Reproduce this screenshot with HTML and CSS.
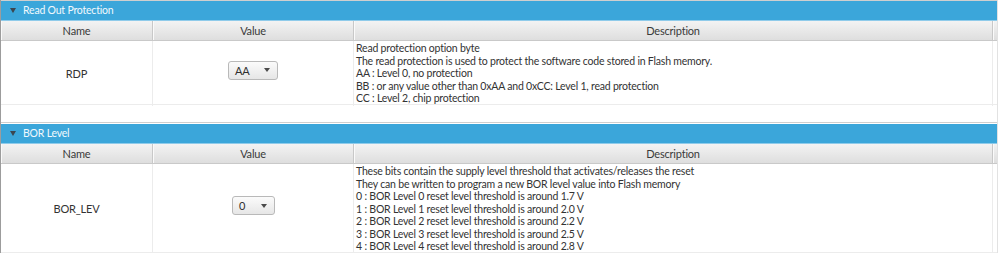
FILE: index.html
```html
<!DOCTYPE html>
<html lang="en">
<head>
    <meta charset="UTF-8">
    <title>Option Bytes</title>
    <link rel="stylesheet" href="styles.css">
</head>
<body>
    <div class="panes">
        <div class="pane pane-rdp">
            <div class="pane-title"><span class="arrow"></span>Read Out Protection</div>
            <div class="table">
                <div class="thead">
                    <div class="th">Name</div>
                    <div class="th">Value</div>
                    <div class="th">Description</div>
                    <div class="th filler"></div>
                </div>
                <div class="tr">
                    <div class="td name">RDP</div>
                    <div class="td value">
                        <div class="combo combo-aa"><span>AA</span><span class="caret"></span></div>
                    </div>
                    <div class="td desc">
                        Read protection option byte<br>
                        The read protection is used to protect the software code stored in Flash memory.<br>
                        AA : Level 0, no protection<br>
                        BB : or any value other than 0xAA and 0xCC: Level 1, read protection<br>
                        CC : Level 2, chip protection
                    </div>
                    <div class="td filler"></div>
                </div>
            </div>
        </div>

        <div class="pane pane-bor">
            <div class="pane-title"><span class="arrow"></span>BOR Level</div>
            <div class="table">
                <div class="thead">
                    <div class="th">Name</div>
                    <div class="th">Value</div>
                    <div class="th">Description</div>
                    <div class="th filler"></div>
                </div>
                <div class="tr">
                    <div class="td name">BOR_LEV</div>
                    <div class="td value">
                        <div class="combo combo-num"><span>0</span><span class="caret"></span></div>
                    </div>
                    <div class="td desc">
                        These bits contain the supply level threshold that activates/releases the reset<br>
                        They can be written to program a new BOR level value into Flash memory<br>
                        0 : BOR Level 0 reset level threshold is around 1.7 V<br>
                        1 : BOR Level 1 reset level threshold is around 2.0 V<br>
                        2 : BOR Level 2 reset level threshold is around 2.2 V<br>
                        3 : BOR Level 3 reset level threshold is around 2.5 V<br>
                        4 : BOR Level 4 reset level threshold is around 2.8 V
                    </div>
                    <div class="td filler"></div>
                </div>
            </div>
        </div>
    </div>
</body>
</html>
```

FILE: styles.css
```css
* {
    margin: 0;
    padding: 0;
    box-sizing: border-box;
}

body {
    background-color: #ffffff;
    color: #333333;
    font-family: Lato, 'Noto Sans', sans-serif;
    font-size: 10.5px;
    letter-spacing: -0.2px;
    width: 998px;
    height: 253px;
    overflow: hidden;
}

.panes {
    border-left: 1px solid #9c9c9c;
    border-right: 1px solid #e2e2e2;
}

.pane {
    border-top: 1px solid #cfcfcf;
}

.pane-rdp {
    height: 122px;
}

.pane-bor {
    padding-top: 1px;
}

.pane-title {
    height: 20px;
    background-color: #3ba6da;
    border-bottom: 1px solid #8fcbea;
    color: #f2f9fd;
    display: flex;
    align-items: center;
    padding-left: 9px;
    line-height: 19px;
}

/* collapse arrow of the titled pane */
.arrow {
    width: 0;
    height: 0;
    border-left: 3.5px solid transparent;
    border-right: 3.5px solid transparent;
    border-top: 5px solid #3b4650;
    margin-right: 7px;
}

.thead,
.tr {
    display: grid;
    grid-template-columns: 152px 201px 639px 1fr;
}

.thead {
    height: 20px;
    background: linear-gradient(#f3f3f3, #dedede);
    border-bottom: 1px solid #c9c9c9;
}

.th {
    display: flex;
    justify-content: center;
    align-items: center;
    border-right: 1px solid #c8c8c8;
    box-shadow: inset 1px 0 0 #fafafa;
    color: #3a3a3a;
    font-size: 11px;
}

.tr {
    border-bottom: 1px solid #ececec;
}

.td {
    border-right: 1px solid #ececec;
}

.filler {
    border-right: none;
}

.name {
    display: flex;
    justify-content: center;
    align-items: center;
    font-size: 11px;
}

.value {
    display: flex;
    justify-content: center;
    align-items: center;
    padding-bottom: 6px;
}

.desc {
    padding: 1px 0 1px 2px;
    line-height: 12.5px;
    white-space: nowrap;
}

.pane-rdp .tr {
    height: 64px;
}

.pane-bor .tr {
    height: 89px;
}

.combo {
    height: 19px;
    display: flex;
    align-items: center;
    justify-content: space-between;
    padding: 0 7px 0 6px;
    border: 1px solid #b9b9b9;
    border-radius: 3px;
    background: linear-gradient(#fbfbfb, #e6e6e6);
    color: #2f2f2f;
    font-size: 11px;
}

.combo-aa {
    width: 50px;
}

.combo-num {
    width: 43px;
    margin-left: 1px;
}

.caret {
    width: 0;
    height: 0;
    border-left: 3.5px solid transparent;
    border-right: 3.5px solid transparent;
    border-top: 4px solid #4a4a4a;
}
```
